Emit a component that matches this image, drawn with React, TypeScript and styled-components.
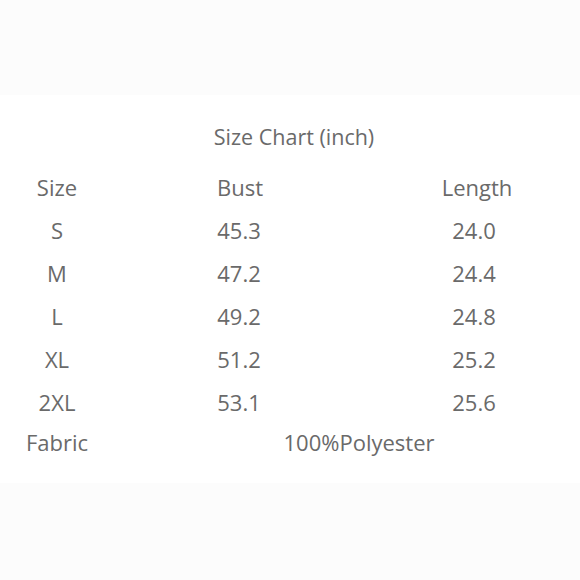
import { Fragment } from "react";
import { createGlobalStyle, styled } from "styled-components";

const GlobalStyle = createGlobalStyle`
  html, body {
    margin: 0;
    padding: 0;
    background: #ffffff;
  }
  body {
    font-family: "Open Sans", "Liberation Sans", sans-serif;
    overflow: hidden;
  }
`;

const Page = styled.div`
  width: 580px;
  height: 580px;
  display: flex;
  flex-direction: column;
`;

const Band = styled.div<{ $height: number }>`
  height: ${(p) => p.$height}px;
  background: #fcfcfc;
  flex-shrink: 0;
`;

const Sheet = styled.div`
  flex: 1;
  background: #ffffff;
  display: flex;
  flex-direction: column;
  padding-top: 27px;
`;

const Title = styled.div`
  font-size: 21.5px;
  line-height: 30px;
  color: #6a6a6a;
  text-align: center;
  padding-left: 8px;
  margin-bottom: 14px;
`;

const Table = styled.div`
  display: grid;
  grid-template-columns: 114px 250px 216px;
  font-size: 22px;
  color: #6a6a6a;
`;

const Cell = styled.div<{ $h?: number; $span?: number; $shift?: number }>`
  height: ${(p) => p.$h ?? 43}px;
  line-height: ${(p) => p.$h ?? 43}px;
  text-align: center;
  white-space: nowrap;
  grid-column: span ${(p) => p.$span ?? 1};
  padding-left: ${(p) => p.$shift ?? 0}px;
`;

const rows = [
  ["S", "45.3", "24.0"],
  ["M", "47.2", "24.4"],
  ["L", "49.2", "24.8"],
  ["XL", "51.2", "25.2"],
  ["2XL", "53.1", "25.6"],
];

function App() {
  return (
    <Page>
      <GlobalStyle />
      <Band $height={95} />
      <Sheet>
        <Title>Size Chart (inch)</Title>
        <Table>
          <Cell>Size</Cell>
          <Cell $shift={2}>Bust</Cell>
          <Cell $shift={10}>Length</Cell>
          {rows.map((r) => (
            <Fragment key={r[0]}>
              <Cell>{r[0]}</Cell>
              <Cell $shift={-3}>{r[1]}</Cell>
              <Cell $shift={4}>{r[2]}</Cell>
            </Fragment>
          ))}
          <Cell $h={37}>Fabric</Cell>
          <Cell $h={37} $span={2} $shift={24}>
            100%Polyester
          </Cell>
        </Table>
      </Sheet>
      <Band $height={97} />
    </Page>
  );
}

export default App;
